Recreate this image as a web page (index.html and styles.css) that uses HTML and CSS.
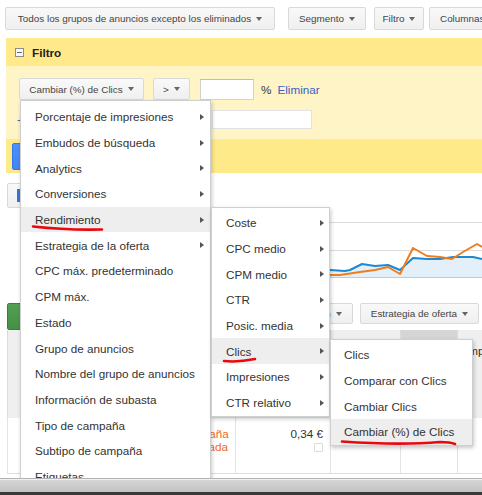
FILE: index.html
```html
<!DOCTYPE html>
<html lang="es">
<head>
    <meta charset="UTF-8">
    <title>Grupos de anuncios</title>
    <link rel="stylesheet" href="styles.css">
</head>
<body>
    <div class="viewport">
        <div class="toolbar">
            <button class="btn btn-wide">Todos los grupos de anuncios excepto los eliminados <span class="caret"></span></button>
            <span class="sep"></span>
            <button class="btn btn-seg">Segmento <span class="caret"></span></button>
            <button class="btn btn-filter">Filtro <span class="caret"></span></button>
            <button class="btn btn-cols">Columnas <span class="caret"></span></button>
        </div>

        <div class="filter">
            <div class="filter-head"><span class="collapse"></span>Filtro</div>
            <div class="filter-body">
                <div class="filter-row first">
                    <button class="btn btn-field">Cambiar (%) de Clics <span class="caret"></span></button>
                    <button class="btn btn-op">&gt; <span class="caret"></span></button>
                    <input class="field-value" type="text">
                    <span class="unit">%</span>
                    <a class="link">Eliminar</a>
                </div>
                <div class="filter-row">
                    <a class="link add">+ Añadir otro</a>
                    <input class="field-search" type="text">
                </div>
            </div>
            <div class="filter-foot">
                <button class="btn-apply">Aplicar</button>
                <button class="btn">Cancelar</button>
            </div>
        </div>

        <div class="results">
            <button class="btn view-btn"><span class="bar-icon"></span><span class="caret"></span></button>

            <svg class="chart" width="475" height="80" viewBox="7 208 475 80">
                <g stroke="#dcdcdc" stroke-width="1">
                    <line x1="30" y1="222.5" x2="482" y2="222.5"/>
                    <line x1="30" y1="250.5" x2="482" y2="250.5"/>
                </g>
                <path fill="#e3f0f9" d="M30 267 L80 268 L130 266 L180 269 L230 267 L280 268 L330 270 L345 271 L350 270 L362 264 L375 266 L388 265 L400 270 L413 258 L427 259 L440 259 L453 257 L473 257 L482 259 L482 277 L30 277 Z"/>
                <line x1="30" y1="277.5" x2="482" y2="277.5" stroke="#d2c7bd" stroke-width="1"/>
                <polyline fill="none" stroke="#1b8ad3" stroke-width="2" stroke-linejoin="round"
                    points="30,267 80,268 130,266 180,269 230,267 280,268 330,270 345,271 350,270 362,264 375,266 388,265 400,270 413,258 427,259 440,259 453,257 473,257 482,259"/>
                <polyline fill="none" stroke="#f27c1c" stroke-width="2" stroke-linejoin="round"
                    points="30,274 80,275 130,273 180,275 230,274 280,276 330,275 340,275 360,272 375,270 388,267 400,274 413,248 427,256 440,257 452,259 463,252 477,244 482,247"/>
            </svg>

            <div class="actions">
                <button class="btn-add">+ Grupo de anuncios</button>
                <div class="actions-right">
                    <button class="btn">Automatización <span class="caret"></span></button>
                    <button class="btn">Estrategia de oferta <span class="caret"></span></button>
                </div>
            </div>

            <table class="grid">
                <colgroup>
                    <col style="width:163px">
                    <col style="width:65px">
                    <col style="width:95px">
                    <col style="width:70px">
                    <col style="width:57px">
                    <col style="width:60px">
                </colgroup>
                <thead>
                    <tr>
                        <th class="first-col">Grupo de anuncios</th>
                        <th>Campaña</th>
                        <th>CPC máx. predeterminado</th>
                        <th>Clics</th>
                        <th class="sorted">Cambiar (%) de Clics</th>
                        <th>Impr.</th>
                    </tr>
                </thead>
                <tbody>
                    <tr>
                        <td></td>
                        <td class="removed">Campaña eliminada</td>
                        <td class="num">0,34 €<span class="edit"></span></td>
                        <td class="num"></td>
                        <td class="num"></td>
                        <td class="num"></td>
                    </tr>
                </tbody>
            </table>
        </div>

        <!-- column picker: three cascading levels -->
        <div class="menu menu-fields">
            <div class="menu-item">Porcentaje de impresiones<span class="sub"></span></div>
            <div class="menu-item">Embudos de búsqueda<span class="sub"></span></div>
            <div class="menu-item">Analytics<span class="sub"></span></div>
            <div class="menu-item">Conversiones<span class="sub"></span></div>
            <div class="menu-item active">Rendimiento<span class="sub"></span></div>
            <div class="menu-item">Estrategia de la oferta<span class="sub"></span></div>
            <div class="menu-item">CPC máx. predeterminado</div>
            <div class="menu-item">CPM máx.</div>
            <div class="menu-item">Estado</div>
            <div class="menu-item">Grupo de anuncios</div>
            <div class="menu-item">Nombre del grupo de anuncios</div>
            <div class="menu-item">Información de subasta</div>
            <div class="menu-item">Tipo de campaña</div>
            <div class="menu-item">Subtipo de campaña</div>
            <div class="menu-item">Etiquetas</div>
        </div>

        <div class="menu menu-perf">
            <div class="menu-item">Coste<span class="sub"></span></div>
            <div class="menu-item">CPC medio<span class="sub"></span></div>
            <div class="menu-item">CPM medio<span class="sub"></span></div>
            <div class="menu-item">CTR<span class="sub"></span></div>
            <div class="menu-item">Posic. media<span class="sub"></span></div>
            <div class="menu-item active">Clics<span class="sub"></span></div>
            <div class="menu-item">Impresiones<span class="sub"></span></div>
            <div class="menu-item">CTR relativo<span class="sub"></span></div>
        </div>

        <div class="menu menu-clicks">
            <div class="menu-item">Clics</div>
            <div class="menu-item">Comparar con Clics</div>
            <div class="menu-item">Cambiar Clics</div>
            <div class="menu-item active">Cambiar (%) de Clics</div>
        </div>

        <!-- hand-drawn red marks over the menu path -->
        <svg class="marks" width="482" height="478" viewBox="0 0 482 478">
            <g fill="none" stroke="#e8090e" stroke-width="2.6" stroke-linecap="round">
                <path d="M33 226.5 C55 229 80 230 102 229.5"/>
                <path d="M224 361 Q238 362.5 255 359"/>
                <path d="M342 441.5 Q400 445.5 440 442 Q450 442 455 444"/>
            </g>
        </svg>
    </div>
    <div class="statusbar"></div>
</body>
</html>
```

FILE: styles.css
```css
* {
    margin: 0;
    padding: 0;
    box-sizing: border-box;
}

html, body {
    width: 100%;
    height: 100%;
}

body {
    font-family: "Liberation Sans", Arial, sans-serif;
    background-color: #fff;
    color: #333;
    overflow: hidden;
}

.viewport {
    position: relative;
    height: 478px;
    overflow: hidden;
}

/* buttons */

.btn {
    display: inline-flex;
    align-items: center;
    justify-content: center;
    gap: 5px;
    height: 23px;
    padding: 0 10px;
    border: 1px solid #d9d9d9;
    border-radius: 2px;
    background: linear-gradient(#f9f9f9, #efefef);
    color: #444;
    font: 9.9px "Liberation Sans", Arial, sans-serif;
    white-space: nowrap;
    flex-shrink: 0;
}

.caret {
    width: 0;
    height: 0;
    border-left: 3.5px solid transparent;
    border-right: 3.5px solid transparent;
    border-top: 4px solid #666;
}

/* top toolbar */

.toolbar {
    display: flex;
    height: 38px;
    padding: 7px 0 0 5px;
}

.btn-wide {
    width: 270px;
}

.sep {
    width: 1px;
    height: 23px;
    background: #dedede;
    margin: 0 0 0 6px;
}

.btn-seg {
    width: 78px;
    margin-left: 7px;
}

.btn-filter {
    width: 50px;
    margin-left: 8px;
}

.btn-cols {
    margin-left: 5px;
    justify-content: flex-start;
}

/* filter panel */

.filter {
    margin-left: 6px;
}

.filter-head {
    height: 28px;
    background: #ffe98b;
    display: flex;
    align-items: center;
    gap: 8px;
    padding-left: 9px;
    font-size: 11.7px;
    font-weight: bold;
    color: #222;
}

.collapse {
    width: 9px;
    height: 9px;
    border: 1px solid #8c8c8c;
    background: linear-gradient(#666, #666) center / 5px 1px no-repeat, #f7f7f7;
}

.filter-body {
    height: 73px;
    background: #fff4c6;
    padding: 12px 0 0 9px;
}

.filter-row {
    display: flex;
    align-items: center;
}

.filter-row.first {
    padding-left: 4px;
    margin-bottom: 10px;
}

.btn-field {
    width: 125px;
    height: 22px;
}

.btn-op {
    width: 37px;
    height: 22px;
    margin-left: 9px;
}

.field-value {
    width: 54px;
    height: 21px;
    margin-left: 10px;
    border: 1px solid #d2d2d2;
    border-top-color: #bdbdbd;
    background: #fff;
}

.unit {
    margin-left: 7px;
    font-size: 11.7px;
    color: #333;
}

.link {
    margin-left: 6px;
    font-size: 11.7px;
    color: #3b5ec7;
    cursor: pointer;
}

.link.add {
    width: 195px;
    margin-left: 2px;
}

.field-search {
    width: 100px;
    height: 19px;
    border: 1px solid #e2e2e2;
    background: #fff;
}

.filter-foot {
    height: 34px;
    background: #ffea8a;
    display: flex;
    gap: 8px;
    padding: 4px 6px;
}

.btn-apply {
    height: 27px;
    padding: 0 14px;
    border: 1px solid #3079ed;
    border-radius: 2px;
    background: linear-gradient(#4d90fe, #4585ee);
    color: #fff;
    font: bold 11.7px "Liberation Sans", Arial, sans-serif;
}

.filter-foot .btn {
    height: 27px;
}

/* chart and table */

.results {
    padding: 10px 0 0 7px;
}

.view-btn {
    width: 44px;
    height: 25px;
    justify-content: flex-start;
    padding-left: 9px;
}

.bar-icon {
    width: 3px;
    height: 13px;
    background: #3a73d6;
}

.chart {
    display: block;
}

.actions {
    display: flex;
    justify-content: space-between;
    align-items: flex-start;
    margin-top: 15px;
    padding-right: 3px;
}

.actions .btn {
    height: 21px;
}

.actions-right {
    display: flex;
    gap: 7px;
}

.btn-add {
    height: 27px;
    padding: 0 12px;
    border: 1px solid #3b7e3b;
    border-radius: 2px;
    background: linear-gradient(#53a153, #468f46);
    color: #fff;
    font: bold 11.7px "Liberation Sans", Arial, sans-serif;
}

.grid {
    width: 510px;
    table-layout: fixed;
    border-collapse: collapse;
    font-size: 11.7px;
}

.grid th {
    height: 88px;
    background: #efefef;
    border-left: 1px solid #dcdcdc;
    vertical-align: top;
    text-align: left;
    padding: 14px 7px 0;
    font-weight: normal;
    color: #333;
}

.grid th.first-col {
    padding-left: 24px;
}

.grid th.sorted {
    background: #d5d5d5;
}

.grid td {
    height: 55px;
    border-left: 1px solid #e3e3e3;
    border-bottom: 1px solid #dedede;
    vertical-align: top;
    padding: 9px 7px 0;
    line-height: 13px;
}

.grid td.removed {
    color: #ee6b22;
}

.grid td.num {
    text-align: right;
    color: #333;
}

.edit {
    display: block;
    width: 9px;
    height: 9px;
    margin: 3px 0 0 auto;
    border: 1px solid #dcdcdc;
    border-radius: 1px;
}

/* dropdown menus */

.menu {
    position: absolute;
    background: #fff;
    border: 1px solid #cfcfcf;
    box-shadow: 1px 2px 4px rgba(0, 0, 0, 0.22);
    font-size: 11.7px;
    color: #333;
}

.menu-item {
    height: 25.7px;
    display: flex;
    align-items: center;
    white-space: nowrap;
}

.menu-item.active {
    background: #eeeeee;
}

.sub {
    margin-left: auto;
    width: 0;
    height: 0;
    border-top: 3px solid transparent;
    border-bottom: 3px solid transparent;
    border-left: 4px solid #555;
}

.menu-fields {
    left: 20px;
    top: 100px;
    width: 191px;
    padding-top: 3px;
}

.menu-fields .menu-item {
    padding: 0 6px 0 14px;
}

.menu-perf {
    left: 211px;
    top: 207px;
    width: 119px;
    padding-top: 2px;
}

.menu-perf .menu-item {
    padding: 0 5px 0 14px;
}

.menu-clicks {
    left: 330px;
    top: 339px;
    width: 143px;
    padding-top: 2px;
}

.menu-clicks .menu-item {
    padding: 0 8px 0 13px;
}

.marks {
    position: absolute;
    left: 0;
    top: 0;
    pointer-events: none;
}

/* browser status strip */

.statusbar {
    height: 17px;
    border-top: 1px solid #b3b3b3;
    background: linear-gradient(#f0f0f0 0 1px, #d6d6d6 1px, #c2c2c2 13px, #3a3a3a 13px);
}
```
